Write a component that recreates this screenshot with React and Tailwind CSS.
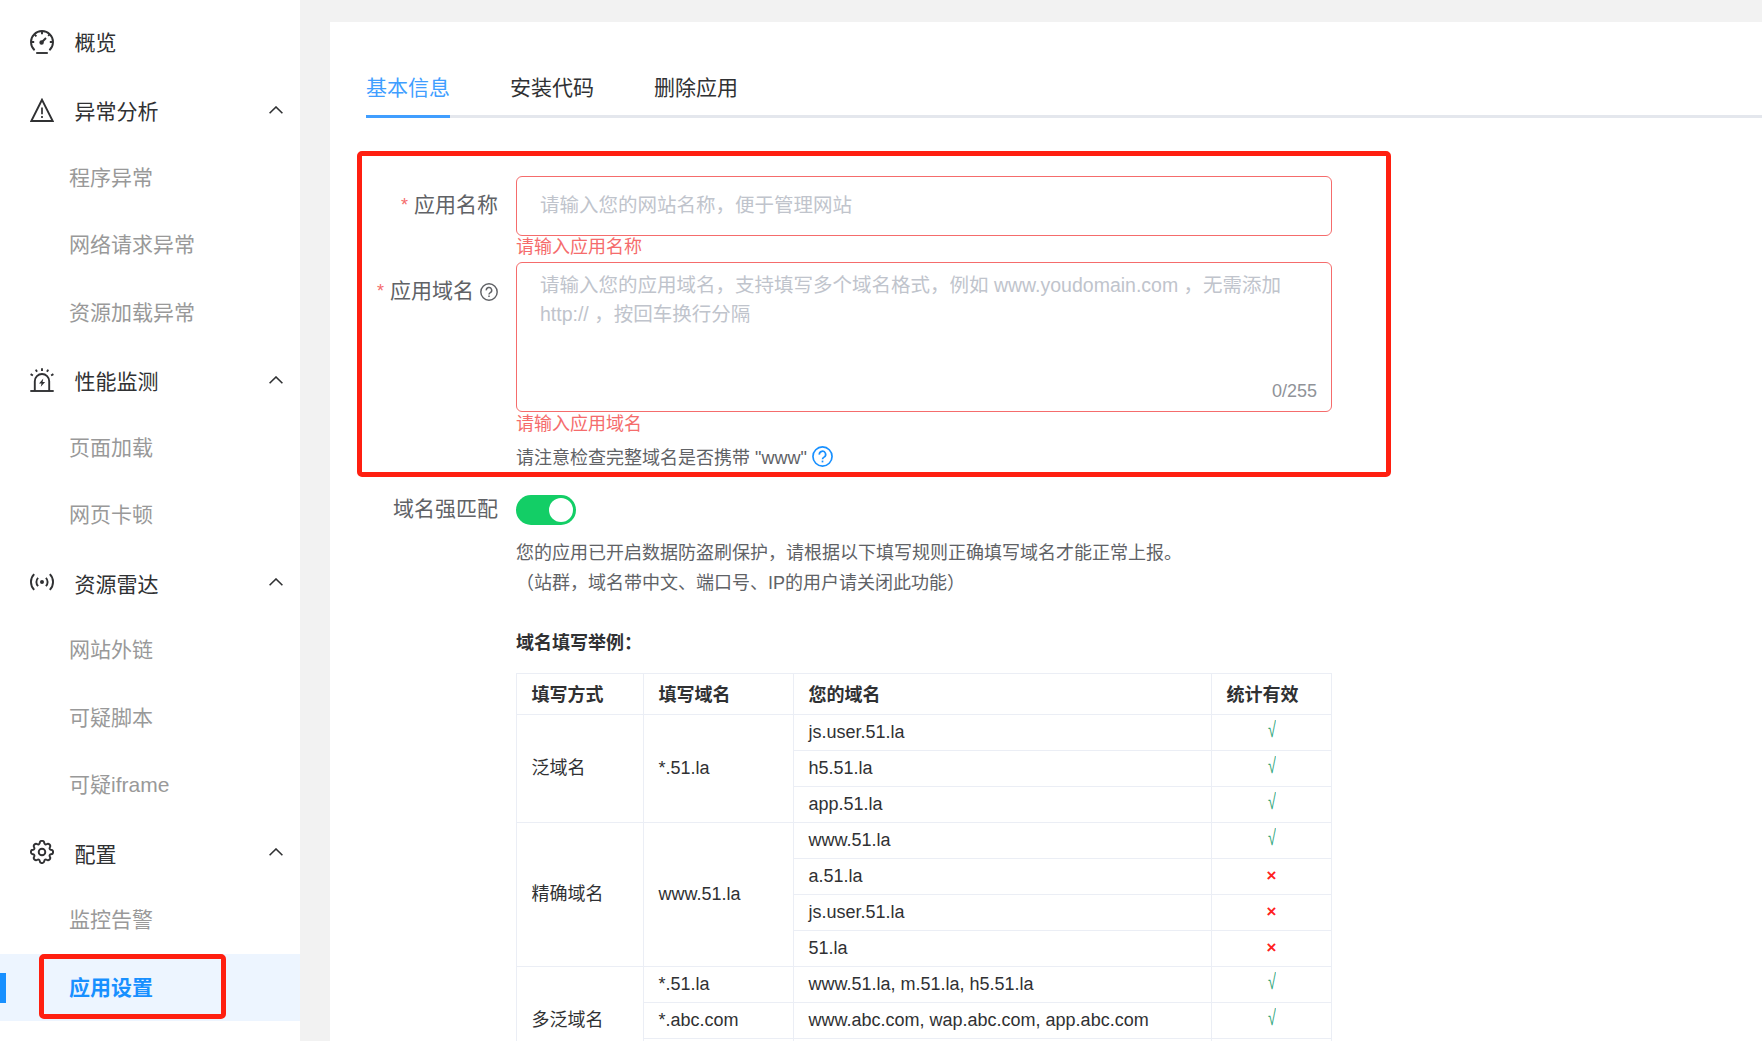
const ICONS = {
  gauge: (
    <>
      <path d="M4.6 20.2A11 11 0 1 1 19.4 20.2" />
      <path d="M12 1v3.2M1.2 12h3M19.8 12h3M4.4 4.4l2 2M19.6 4.4l-1.4 1.4" />
      <path d="M12 12l4-4" />
      <circle cx="11.6" cy="12.4" r="1.3" fill="currentColor" />
      <path d="M6.2 23h11.6" />
    </>
  ),
  warning: (
    <>
      <path d="M12 1.8L1.3 23h21.4z" />
      <path d="M12 9.5v6.8M12 18v2" strokeWidth="1.7" />
    </>
  ),
  alarm: (
    <>
      <path d="M.3 23h23.4" />
      <path d="M4.8 23v-9.8a7.2 7.2 0 0 1 14.4 0V23" />
      <path d="M12 .3v2.6M5.8 1.6l1.2 2.2M18.2 1.6L17 3.8M.6 6.2l2.3 1.3M23.4 6.2l-2.3 1.3" />
      <path d="M13.3 10.6l-4.3 4.8h2.5l-.7 3.4 4.3-4.9h-2.5z" fill="currentColor" stroke="none" />
    </>
  ),
  radar: (
    <>
      <circle cx="12" cy="12" r="2" fill="currentColor" stroke="none" />
      <path d="M8.1 7.8a6 6 0 0 0 0 8.4M15.9 7.8a6 6 0 0 1 0 8.4" />
      <path d="M4.2 4.2a11 11 0 0 0 0 15.6M19.8 4.2a11 11 0 0 1 0 15.6" />
    </>
  ),
  gear: (
    <>
      <circle cx="12" cy="12" r="3.3" />
      <path d="M9.7 3.2a2.3 2.3 0 0 1 4.6 0 1.5 1.5 0 0 0 2.3 1 2.3 2.3 0 0 1 3.2 3.2 1.5 1.5 0 0 0 1 2.3 2.3 2.3 0 0 1 0 4.6 1.5 1.5 0 0 0-1 2.3 2.3 2.3 0 0 1-3.2 3.2 1.5 1.5 0 0 0-2.3 1 2.3 2.3 0 0 1-4.6 0 1.5 1.5 0 0 0-2.3-1 2.3 2.3 0 0 1-3.2-3.2 1.5 1.5 0 0 0-1-2.3 2.3 2.3 0 0 1 0-4.6 1.5 1.5 0 0 0 1-2.3 2.3 2.3 0 0 1 3.2-3.2 1.5 1.5 0 0 0 2.3-1z" />
    </>
  ),
};

const MENU = [
  { label: '概览', icon: 'gauge' },
  { label: '异常分析', icon: 'warning', children: ['程序异常', '网络请求异常', '资源加载异常'] },
  { label: '性能监测', icon: 'alarm', children: ['页面加载', '网页卡顿'] },
  { label: '资源雷达', icon: 'radar', children: ['网站外链', '可疑脚本', '可疑iframe'] },
  { label: '配置', icon: 'gear', children: ['监控告警', '应用设置'] },
];

const TABS = ['基本信息', '安装代码', '删除应用'];

const ROWS = [
  { type: '泛域名', typeSpan: 3, rule: '*.51.la', ruleSpan: 3, domain: 'js.user.51.la', ok: true },
  { domain: 'h5.51.la', ok: true },
  { domain: 'app.51.la', ok: true },
  { type: '精确域名', typeSpan: 4, rule: 'www.51.la', ruleSpan: 4, domain: 'www.51.la', ok: true },
  { domain: 'a.51.la', ok: false },
  { domain: 'js.user.51.la', ok: false },
  { domain: '51.la', ok: false },
  { type: '多泛域名', typeSpan: 3, rule: '*.51.la', ruleSpan: 1, domain: 'www.51.la, m.51.la, h5.51.la', ok: true },
  { rule: '*.abc.com', ruleSpan: 1, domain: 'www.abc.com, wap.abc.com, app.abc.com', ok: true },
  { rule: '', ruleSpan: 1, domain: '', ok: null },
];

function Icon({ name }) {
  return (
    <svg className="w-6 h-6 shrink-0 mb-[1px]" viewBox="0 0 24 24" fill="none" stroke="currentColor" strokeWidth="1.9">
      {ICONS[name]}
    </svg>
  );
}

function HelpIcon({ className }) {
  return (
    <svg className={className} viewBox="0 0 20 20" fill="none" stroke="currentColor" strokeWidth="1.6">
      <circle cx="10" cy="10" r="9.1" />
      <path d="M7 8.2a3 3 0 1 1 4.5 2.4c-1 .6-1.5 1-1.5 2.1" />
      <path d="M10 13.9v1.7" />
    </svg>
  );
}

function MenuGroup({ group }) {
  return (
    <>
      <div className="h-[67.5px] pl-[30px] pr-[17px] flex items-center text-[#303133]">
        <Icon name={group.icon} />
        <span className={group.children ? 'ml-[20.5px] flex-1 pt-1' : 'ml-[20.5px] flex-1'}>{group.label}</span>
        {group.children && (
          <svg className="w-[14px] h-2 mb-[1px]" viewBox="0 0 14 8" fill="none" stroke="currentColor" strokeWidth="1.6">
            <path d="M.6 7.2L7 1l6.4 6.2" />
          </svg>
        )}
      </div>
      {group.children?.map((label) =>
        label === '应用设置' ? (
          <div key={label} className="relative h-[67.5px] pl-[69px] flex items-center bg-[#edf5ff] text-[#1890ff] font-bold">
            {label}
            <span className="absolute left-0 top-[19px] w-[6px] h-[30px] bg-[#1890ff]" />
            <span className="absolute left-[39px] top-0 w-[187px] h-[65px] border-5 border-[#ff1f10] rounded-[5px]" />
          </div>
        ) : (
          <div key={label} className="h-[67.5px] pl-[69px] flex items-center text-[#999]">{label}</div>
        )
      )}
    </>
  );
}

function Label({ text, required, help }) {
  return (
    <div className="w-[132px] shrink-0 h-[58px] flex items-center justify-end whitespace-nowrap text-[21px] text-[#606266]">
      {required && <span className="mr-[6px] text-[18px] text-[#f56c6c]">*</span>}
      {text}
      {help && <HelpIcon className="w-[18px] h-[18px] ml-[6px] mt-[2px]" />}
    </div>
  );
}

function ExampleTable() {
  return (
    <table className="w-[816px] table-fixed border-separate border-spacing-0 border-t border-l border-[#ebeef5] text-[#303133] [&_td]:border-r [&_td]:border-b [&_th]:border-r [&_th]:border-b [&_td]:border-[#ebeef5] [&_th]:border-[#ebeef5] [&_td]:pt-0 [&_td]:pb-[2px] [&_th]:pt-[2px] [&_th]:pb-0 [&_td]:px-[14.5px] [&_th]:px-[14.5px] leading-6">
      <colgroup>
        <col className="w-[127px]" />
        <col className="w-[150px]" />
        <col className="w-[418px]" />
        <col className="w-[120px]" />
      </colgroup>
      <thead>
        <tr className="h-[41px] text-left">
          <th>填写方式</th>
          <th>填写域名</th>
          <th>您的域名</th>
          <th>统计有效</th>
        </tr>
      </thead>
      <tbody>
        {ROWS.map((row, i) => (
          <tr key={i} className="h-[36px]">
            {row.typeSpan && <td rowSpan={row.typeSpan}>{row.type}</td>}
            {row.ruleSpan && <td rowSpan={row.ruleSpan}>{row.rule}</td>}
            <td>{row.domain}</td>
            <td>
              <div className="flex justify-center">
                {row.ok === true && (
                  <span className="text-[#2fa67a] leading-5 mb-1 scale-x-80 scale-y-120">√</span>
                )}
                {row.ok === false && <span className="text-[#ff2020] text-[17px] font-bold leading-6">×</span>}
              </div>
            </td>
          </tr>
        ))}
      </tbody>
    </table>
  );
}

export default function App() {
  return (
    <div className="flex h-[1041px] overflow-hidden bg-[#f2f2f2] font-['Liberation_Sans','Noto_Sans_CJK_SC',sans-serif] text-[18px]">
      <aside className="w-[300px] shrink-0 pt-[8.75px] bg-white text-[21px]">
        {MENU.map((group) => (
          <MenuGroup key={group.label} group={group} />
        ))}
      </aside>

      <main className="flex-1 mt-[22px] ml-[30px] pl-9 bg-white">
        <nav className="flex gap-[60px] h-24 border-b-3 border-[#e4e7ed] text-[21px] text-[#303133]">
          {TABS.map((tab, i) => (
            <div
              key={tab}
              className={i === 0 ? 'h-24 pt-[36px] border-b-3 border-[#409eff] text-[#409eff]' : 'h-24 pt-[36px]'}
            >
              <div className="leading-[60px]">{tab}</div>
            </div>
          ))}
        </nav>

        <form className="relative pt-[58px]">
          <div className="absolute -left-[9px] top-[33px] w-[1034px] h-[326px] border-5 border-[#ff1f10] rounded-[5px]" />

          <div className="flex h-[86px]">
            <Label text="应用名称" required />
            <div className="ml-[18px] w-[816px]">
              <div className="h-[60px] px-[23px] flex items-center border border-[#f56c6c] rounded-[6px] text-[19.5px] text-[#c0c4cc]">
                请输入您的网站名称，便于管理网站
              </div>
              <p className="leading-[22px] text-[#f56c6c]">请输入应用名称</p>
            </div>
          </div>

          <div className="flex h-[218px]">
            <Label text="应用域名" required help />
            <div className="ml-[18px] w-[816px]">
              <div className="flex flex-col justify-between h-[150px] pt-2 px-[23px] border border-[#f56c6c] rounded-[6px]">
                <p className="text-[19.5px] leading-[29.25px] text-[#c0c4cc]">
                  请输入您的应用域名，支持填写多个域名格式，例如 www.youdomain.com ，无需添加
                  <br />
                  http:// ，按回车换行分隔
                </p>
                <span className="self-end -mr-[9px] mb-[6px] text-[#909399]">0/255</span>
              </div>
              <p className="leading-[25px] text-[#f56c6c]">请输入应用域名</p>
              <p className="mt-2 flex items-center leading-[27px] text-[#606266]">
                请注意检查完整域名是否携带 "www"
                <HelpIcon className="w-[21px] h-[21px] ml-[5px] mb-[4px] text-[#1890ff]" />
              </p>
            </div>
          </div>

          <div className="flex">
            <Label text="域名强匹配" />
            <div className="ml-[18px] pt-[15px]">
              <div className="w-[60px] h-[30px] p-[3px] flex justify-end rounded-full bg-[#13ce66]">
                <span className="w-6 h-6 rounded-full bg-white" />
              </div>
              <div className="mt-[13px] leading-[30px] text-[#606266] whitespace-nowrap">
                <p>您的应用已开启数据防盗刷保护，请根据以下填写规则正确填写域名才能正常上报。</p>
                <p>（站群，域名带中文、端口号、IP的用户请关闭此功能）</p>
              </div>
              <p className="mt-[30px] mb-[15px] leading-[30px] font-bold text-[#303133]">域名填写举例：</p>
              <ExampleTable />
            </div>
          </div>
        </form>
      </main>
    </div>
  );
}
